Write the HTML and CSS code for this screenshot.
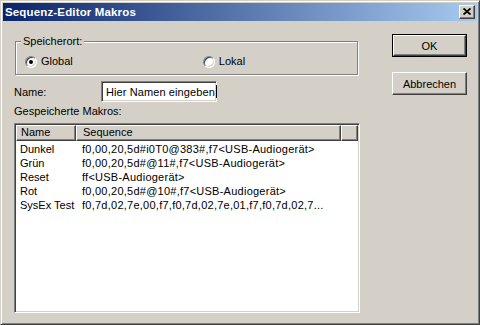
FILE: index.html
```html
<!DOCTYPE html>
<html lang="de">
<head>
	<meta charset="UTF-8">
	<title>Sequenz-Editor Makros</title>
	<link rel="stylesheet" href="styles.css">
</head>
<body>

	<div class="dialog">
		<div class="titlebar">
			<span class="title">Sequenz-Editor Makros</span>
			<span class="close">
				<svg width="8" height="7" viewBox="0 0 8 7">
					<path d="M0.5 0.5 L7.5 6.5 M7.5 0.5 L0.5 6.5" stroke="#000" stroke-width="1.8" fill="none"/>
				</svg>
			</span>
		</div>

		<div class="client">
			<div class="left">
				<div class="group">
					<span class="legend">Speicherort:</span>
					<div class="radios">
						<label class="option"><span class="radio checked"></span>Global</label>
						<label class="option"><span class="radio"></span>Lokal</label>
					</div>
				</div>

				<div class="namerow">
					<span class="namelabel">Name:</span>
					<div class="edit">Hier Namen eingeben<span class="caret"></span></div>
				</div>

				<div class="listlabel">Gespeicherte Makros:</div>

				<div class="list">
					<div class="header">
						<span class="hcell c-name">Name</span>
						<span class="hcell c-seq">Sequence</span>
						<span class="hcell c-fill"></span>
					</div>
					<div class="row"><span class="c-name">Dunkel</span><span class="c-seq">f0,00,20,5d#i0T0@383#,f7&lt;USB-Audiogerät&gt;</span></div>
					<div class="row"><span class="c-name">Grün</span><span class="c-seq">f0,00,20,5d#@11#,f7&lt;USB-Audiogerät&gt;</span></div>
					<div class="row"><span class="c-name">Reset</span><span class="c-seq">ff&lt;USB-Audiogerät&gt;</span></div>
					<div class="row"><span class="c-name">Rot</span><span class="c-seq">f0,00,20,5d#@10#,f7&lt;USB-Audiogerät&gt;</span></div>
					<div class="row"><span class="c-name">SysEx Test</span><span class="c-seq">f0,7d,02,7e,00,f7,f0,7d,02,7e,01,f7,f0,7d,02,7...</span></div>
				</div>
			</div>

			<div class="buttons">
				<div class="btn default"><span>OK</span></div>
				<div class="btn"><span>Abbrechen</span></div>
			</div>
		</div>
	</div>

</body>
</html>
```

FILE: styles.css
```css
html, body {
	margin: 0;
	padding: 0;
	background: #d4d0c8;
}
body {
	font-family: "Liberation Sans", Arial, sans-serif;
	font-size: 11px;
	color: #000;
}

.dialog {
	width: 480px;
	height: 325px;
	box-sizing: border-box;
	border: 1px solid;
	border-color: #d4d0c8 #404040 #404040 #d4d0c8;
	box-shadow: inset 1px 1px #fff, inset -1px -1px #808080;
	padding: 2px;
	background: #d4d0c8;
}

/* caption */
.titlebar {
	height: 18px;
	display: flex;
	align-items: center;
	justify-content: space-between;
	background: linear-gradient(to right, #0a246a, #a6caf0);
	padding-left: 2px;
}
.title {
	color: #fff;
	font-weight: bold;
	font-size: 11.5px;
	letter-spacing: 0.15px;
}
.close {
	width: 16px;
	height: 14px;
	box-sizing: border-box;
	margin-right: 2px;
	background: #d4d0c8;
	border: 1px solid;
	border-color: #fff #404040 #404040 #fff;
	box-shadow: inset -1px -1px #808080;
	display: flex;
	align-items: center;
	justify-content: center;
}
.close svg {
	display: block;
	margin: 0 1px 1px 0;
}

.client {
	display: flex;
	padding: 13px 0 0 11px;
}

.left {
	width: 346px;
}

/* group box */
.group {
	position: relative;
	margin: 7px 0 0 1px;
	width: 343px;
	height: 34px;
	box-sizing: border-box;
	border: 1px solid #808080;
	box-shadow: inset 1px 1px #fff, 1px 1px #fff;
}
.legend {
	position: absolute;
	left: 5px;
	top: -8px;
	padding: 0 2px;
	background: #d4d0c8;
	line-height: 14px;
}
.radios {
	display: flex;
	padding: 13px 0 0 9px;
}
.option {
	display: flex;
	align-items: center;
	line-height: 13px;
}
.option + .option {
	margin-left: 130px;
}
.radio {
	width: 12px;
	height: 12px;
	box-sizing: border-box;
	border-radius: 50%;
	background: #fff;
	border: 1px solid;
	border-color: #808080 #fff #fff #808080;
	box-shadow: inset 1px 1px #404040, inset -1px -1px #d4d0c8;
	margin-right: 4px;
	display: flex;
	align-items: center;
	justify-content: center;
}
.radio.checked::after {
	content: "";
	width: 4px;
	height: 4px;
	border-radius: 50%;
	background: #000;
}

/* name field */
.namerow {
	display: flex;
	align-items: center;
	margin-top: 6px;
}
.namelabel {
	width: 87px;
}
.edit {
	width: 116px;
	height: 21px;
	box-sizing: border-box;
	background: #fff;
	border: 1px solid;
	border-color: #808080 #fff #fff #808080;
	box-shadow: inset 1px 1px #404040, inset -1px -1px #d4d0c8;
	padding: 0 0 0 4px;
	display: flex;
	align-items: center;
	white-space: nowrap;
	letter-spacing: 0.1px;
}
.caret {
	width: 1px;
	height: 13px;
	background: #000;
	margin-left: 1px;
}

.listlabel {
	margin-top: 3px;
	line-height: 13px;
}

/* list view */
.list {
	margin-top: 5px;
	height: 190px;
	box-sizing: border-box;
	background: #fff;
	border: 1px solid;
	border-color: #808080 #fff #fff #808080;
	box-shadow: inset 1px 1px #404040, inset -1px -1px #d4d0c8;
	padding: 1px;
}
.header {
	display: flex;
	height: 16px;
	margin-bottom: 1px;
}
.hcell {
	box-sizing: border-box;
	background: #d4d0c8;
	border: 1px solid;
	border-color: #fff #404040 #404040 #fff;
	box-shadow: inset -1px -1px #808080;
	line-height: 13px;
	padding-left: 4px;
}
.hcell.c-fill {
	flex: 1;
}
.c-name {
	width: 60px;
	box-sizing: border-box;
	padding-left: 4px;
	flex-shrink: 0;
}
.c-seq {
	width: 265px;
	box-sizing: border-box;
	padding-left: 6px;
	flex-shrink: 0;
	white-space: nowrap;
	overflow: hidden;
}
.row .c-seq {
	letter-spacing: 0.25px;
}
.row {
	display: flex;
	height: 14px;
	line-height: 14px;
}

/* buttons */
.buttons {
	margin-left: 32px;
	width: 75px;
}
.btn {
	height: 23px;
	box-sizing: border-box;
	border: 1px solid;
	border-color: #fff #404040 #404040 #fff;
	box-shadow: inset -1px -1px #808080;
	display: flex;
	align-items: center;
	justify-content: center;
	margin-bottom: 15px;
}
.btn.default {
	border: 1px solid #000;
	box-shadow: none;
}
.btn.default span {
	display: flex;
	align-items: center;
	justify-content: center;
	width: 100%;
	height: 100%;
	box-sizing: border-box;
	border: 1px solid;
	border-color: #fff #404040 #404040 #fff;
	box-shadow: inset -1px -1px #808080;
}
```
